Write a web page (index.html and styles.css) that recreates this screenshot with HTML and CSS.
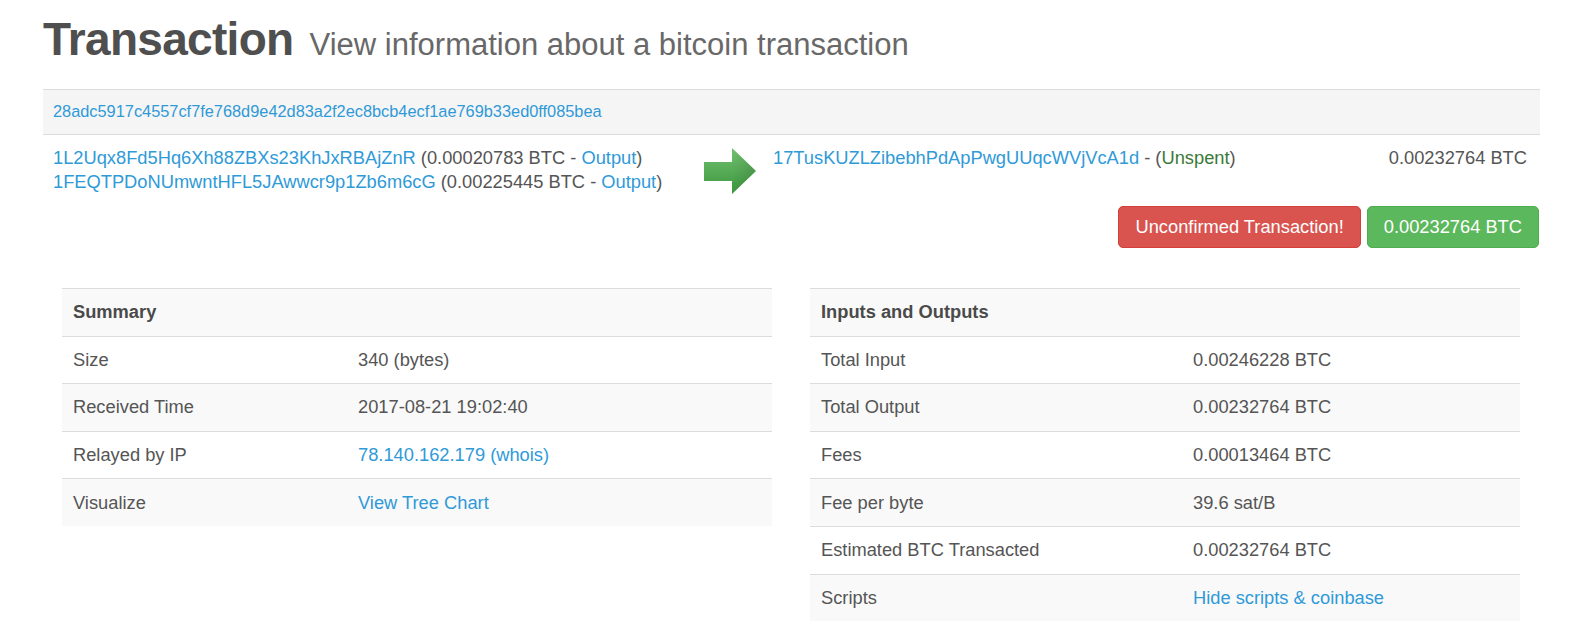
FILE: index.html
```html
<!DOCTYPE html>
<html lang="en">
<head>
<meta charset="utf-8">
<title>Transaction</title>
<link rel="stylesheet" href="styles.css">
</head>
<body>
<div class="page">
  <h1 class="title">Transaction <small class="subtitle">View information about a bitcoin transaction</small></h1>

  <div class="tx">
    <div class="tx-hash"><a href="#">28adc5917c4557cf7fe768d9e42d83a2f2ec8bcb4ecf1ae769b33ed0ff085bea</a></div>
    <div class="tx-body">
      <div class="tx-flow">
        <div class="tx-inputs">
          <div><a href="#">1L2Uqx8Fd5Hq6Xh88ZBXs23KhJxRBAjZnR</a> (0.00020783 BTC - <a href="#">Output</a>)</div>
          <div><a href="#">1FEQTPDoNUmwntHFL5JAwwcr9p1Zb6m6cG</a> (0.00225445 BTC - <a href="#">Output</a>)</div>
        </div>
        <svg class="tx-arrow" width="53" height="46" viewBox="0 0 53 46" aria-hidden="true">
          <defs>
            <linearGradient id="ag" x1="0" y1="0" x2="0" y2="1">
              <stop offset="0" stop-color="#72c272"/>
              <stop offset="1" stop-color="#3b953b"/>
            </linearGradient>
            <linearGradient id="ah" x1="0" y1="0" x2="1" y2="0">
              <stop offset="0" stop-color="#000" stop-opacity="0"/>
              <stop offset="1" stop-color="#000" stop-opacity="0.12"/>
            </linearGradient>
          </defs>
          <polygon points="1,14 29,14 29,0 53,23 29,46 29,33 1,33" fill="url(#ag)"/>
          <polygon points="29,0 53,23 29,46" fill="url(#ah)"/>
        </svg>
        <div class="tx-outputs">
          <div class="out-row">
            <span><a href="#">17TusKUZLZibebhPdApPwgUUqcWVjVcA1d</a> - (<span class="unspent">Unspent</span>)</span>
            <span class="out-amount">0.00232764 BTC</span>
          </div>
        </div>
      </div>
      <div class="tx-status">
        <button class="btn btn-danger">Unconfirmed Transaction!</button>
        <button class="btn btn-success">0.00232764 BTC</button>
      </div>
    </div>
  </div>

  <div class="details">
    <table class="info info-summary">
      <colgroup><col class="col-lbl"><col></colgroup>
      <tbody>
        <tr><th colspan="2">Summary</th></tr>
        <tr><td>Size</td><td>340 (bytes)</td></tr>
        <tr><td>Received Time</td><td>2017-08-21 19:02:40</td></tr>
        <tr><td>Relayed by IP</td><td><a href="#">78.140.162.179 (whois)</a></td></tr>
        <tr><td>Visualize</td><td><a href="#">View Tree Chart</a></td></tr>
      </tbody>
    </table>
    <table class="info info-io">
      <colgroup><col class="col-lbl"><col></colgroup>
      <tbody>
        <tr><th colspan="2">Inputs and Outputs</th></tr>
        <tr><td>Total Input</td><td>0.00246228 BTC</td></tr>
        <tr><td>Total Output</td><td>0.00232764 BTC</td></tr>
        <tr><td>Fees</td><td>0.00013464 BTC</td></tr>
        <tr><td>Fee per byte</td><td>39.6 sat/B</td></tr>
        <tr><td>Estimated BTC Transacted</td><td>0.00232764 BTC</td></tr>
        <tr><td>Scripts</td><td><a href="#">Hide scripts &amp; coinbase</a></td></tr>
      </tbody>
    </table>
  </div>
</div>
</body>
</html>
```
FILE: styles.css
```css
* { box-sizing: border-box; }

html, body {
  margin: 0;
  padding: 0;
  background: #fff;
}

body {
  font-family: "Liberation Sans", Arial, Helvetica, sans-serif;
  font-size: 18.3px;
  line-height: 24px;
  color: #555;
}

a {
  color: #2f9ad8;
  text-decoration: none;
}

.page {
  padding: 13px 35px 0 43px;
}

.title {
  margin: 0;
  font-size: 46px;
  line-height: 52px;
  font-weight: bold;
  letter-spacing: -0.7px;
  color: #4f4f4f;
  white-space: nowrap;
}

.subtitle {
  font-size: 31px;
  font-weight: normal;
  letter-spacing: 0;
  color: #686868;
  margin-left: 4px;
}

.tx {
  margin-top: 18px;
}

.tx-hash {
  background: #f5f5f5;
  border-top: 1px solid #dcdcdc;
  border-bottom: 1px solid #dcdcdc;
  padding: 10px 10px 12px;
  font-size: 16.35px;
  line-height: 22px;
}

.tx-body {
  padding: 11px 1px 0 10px;
}

.tx-flow {
  display: flex;
  align-items: flex-start;
}

.tx-inputs {
  width: 650px;
  flex: none;
}

.tx-arrow {
  flex: none;
  display: block;
  margin-top: 2px;
  margin-right: 17px;
}

.tx-outputs {
  flex: 1;
  padding-right: 12px;
}

.out-row {
  display: flex;
  justify-content: space-between;
}

.unspent {
  color: #3a7a36;
}

.out-amount {
  color: #555;
}

.tx-status {
  display: flex;
  justify-content: flex-end;
  gap: 6px;
  margin-top: 12px;
}

.btn {
  font-family: inherit;
  font-size: 18.3px;
  line-height: 24px;
  padding: 8px 16px;
  border: 1px solid transparent;
  border-radius: 5px;
  color: #fff;
  cursor: pointer;
}

.btn-danger {
  background: #d9534f;
  border-color: #d43f3a;
}

.btn-success {
  background: #5cb85c;
  border-color: #4cae4c;
}

.details {
  display: grid;
  grid-template-columns: 710px 710px;
  column-gap: 38px;
  align-items: start;
  margin-top: 40px;
  padding: 0 20px 0 19px;
}

.info {
  width: 100%;
  border-collapse: collapse;
  table-layout: fixed;
}

.info th,
.info td {
  text-align: left;
  padding: 10.3px 11px;
  line-height: 26px;
  border-top: 1px solid #dcdcdc;
  vertical-align: top;
}

.info th {
  font-weight: bold;
  color: #4a4a4a;
}

.info tr:nth-child(odd) {
  background: #f9f9f9;
}

.info-summary .col-lbl { width: 285px; }
.info-io .col-lbl { width: 372px; }
```
